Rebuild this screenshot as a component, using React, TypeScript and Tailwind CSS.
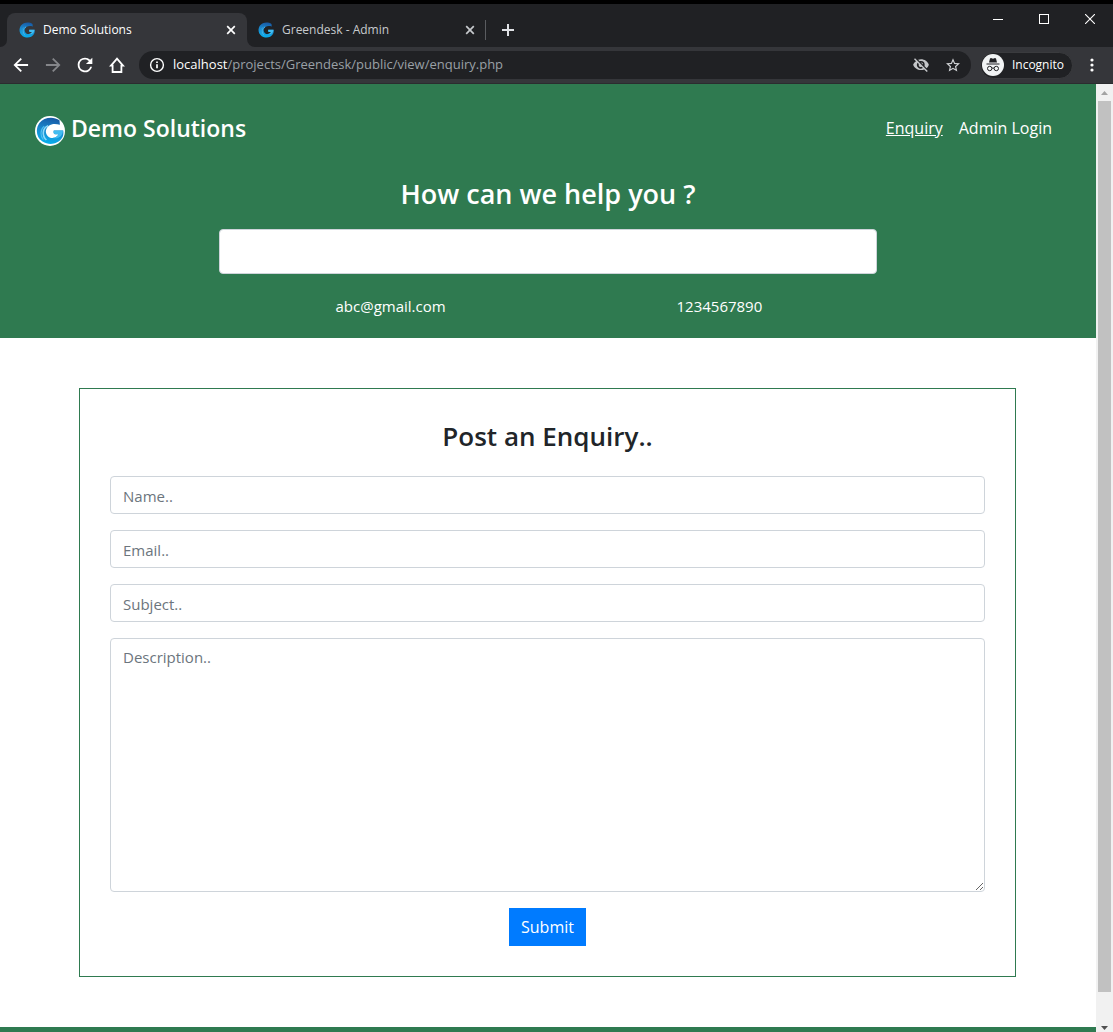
import { useId, type ReactNode } from "react";

function Swirl({ className, badge = false }: { className: string; badge?: boolean }) {
  const id = useId();
  return (
    <svg className={className} viewBox="0 0 32 32" aria-hidden="true">
      <defs>
        <linearGradient id={id} x1="0.6" y1="0" x2="0.4" y2="1">
          <stop offset="0" stopColor="#1757a3" />
          <stop offset="0.45" stopColor="#1b86cb" />
          <stop offset="1" stopColor="#08b0ee" />
        </linearGradient>
      </defs>
      {badge && <circle cx="16" cy="16" r="16" fill="#fff" />}
      <g transform={badge ? "translate(1 1) scale(0.93)" : undefined}>
        <path
          d="M27 3.800C20-1.200 9 .2 4 7c-5 7-3.600 16.500 3.500 21.300C15 33.200 25.500 31.500 30 24c1.500-2.500 1.800-5.500 1.300-8.500H20.500c-1 3 .5 4.400 2 4.400h3.500c-2.500 4.600-8.300 5.400-12 2.400-4-3.300-3.200-9.300.8-12.300C18.100 7.700 22.500 7.500 27.500 9z"
          fill={`url(#${id})`}
        />
        <path d="M31 15.500H20.500c-1 3 .5 4.400 2 4.400h3.500c-1.200 2.700-4 4.200-7 4 6 2.400 12 -2 12-8.400z" fill="#43bdf0" />
        <path
          d="M14 10C7.500 13 6.500 21 12 26.500"
          fill="none"
          stroke={badge ? "#8fdaf9" : "#4cb6ea"}
          strokeWidth="1.800"
        />
        <path d="M9.500 10.500C4.500 15 5 22 8.500 26" fill="none" stroke={badge ? "#4fbdf0" : "#2a9fde"} strokeWidth="1.300" />
      </g>
    </svg>
  );
}

function Close({ className }: { className: string }) {
  return (
    <svg className={className} viewBox="0 0 10 10" fill="none" stroke="currentColor" strokeWidth="1.700" aria-hidden="true">
      <path d="M1.200 1.200l7.600 7.600M8.800 1.200L1.200 8.800" />
    </svg>
  );
}

function IconButton({ label, className = "", children }: { label: string; className?: string; children: ReactNode }) {
  return (
    <button type="button" aria-label={label} className={`flex size-8 shrink-0 items-center justify-center ${className}`}>
      {children}
    </button>
  );
}

function TabStrip() {
  return (
    <div className="flex h-[43px] shrink-0 items-end bg-[#202124]">
      <div className="flex h-[34px] flex-1 items-center">
        <div className="flex h-full w-[7px] items-end bg-[#35363a]">
          <div className="h-full w-full rounded-br-lg bg-[#202124]" />
        </div>
        <div className="flex h-full w-60 items-center rounded-t-lg bg-[#35363a] pr-[9px] pl-3 text-white">
          <Swirl className="size-4" />
          <span className="ml-2 flex-1 text-xs">Demo Solutions</span>
          <button type="button" aria-label="Close tab" className="p-0.5">
            <Close className="size-[10px]" />
          </button>
        </div>
        <div className="h-full bg-[#35363a]">
          <div className="flex h-full w-[238px] items-center rounded-bl-lg bg-[#202124] pr-2 pl-[11px] text-[#c7cacd]">
            <Swirl className="size-4" />
            <span className="ml-2 flex-1 text-xs">Greendesk - Admin</span>
            <button type="button" aria-label="Close tab" className="p-0.5">
              <Close className="size-[10px]" />
            </button>
          </div>
        </div>
        <div className="h-5 w-px bg-[#5a5c60]" />
        <IconButton label="New tab" className="ml-1.5 text-[#dfe1e5]">
          <svg className="size-3" viewBox="0 0 12 12" stroke="currentColor" strokeWidth="2" aria-hidden="true">
            <path d="M6 0v12M0 6h12" />
          </svg>
        </IconButton>
      </div>
      <div className="flex h-full text-white">
        <button type="button" aria-label="Minimize" className="flex h-[30px] w-[46px] items-center justify-center">
          <span className="h-px w-2.5 bg-white" />
        </button>
        <button type="button" aria-label="Maximize" className="flex h-[30px] w-[46px] items-center justify-center">
          <span className="size-[10px] border border-white" />
        </button>
        <button type="button" aria-label="Close window" className="flex h-[30px] w-[46px] items-center justify-center">
          <svg className="size-[10px]" viewBox="0 0 10 10" stroke="currentColor" strokeWidth="1.100" aria-hidden="true">
            <path d="M0 0l10 10M10 0L0 10" />
          </svg>
        </button>
      </div>
    </div>
  );
}

function Toolbar() {
  return (
    <div className="flex h-[37px] shrink-0 items-center border-b border-[#2b2c2f] bg-[#35363a] pr-1 pl-[5px] text-white">
      <IconButton label="Back">
        <svg className="size-5" viewBox="0 0 24 24" fill="currentColor" aria-hidden="true">
          <path d="M20.500 10.900H7.200l5.900-5.900L11.500 3.500 3 12l8.500 8.500 1.600-1.500-5.900-5.900h13.300z" />
        </svg>
      </IconButton>
      <IconButton label="Forward" className="text-[#85868a]">
        <svg className="size-5" viewBox="0 0 24 24" fill="currentColor" aria-hidden="true">
          <path d="M3.500 10.900h13.300L10.900 5l1.600-1.500L21 12l-8.500 8.500-1.600-1.500 5.900-5.900H3.500z" />
        </svg>
      </IconButton>
      <IconButton label="Reload">
        <svg className="size-[22px]" viewBox="0 0 24 24" fill="currentColor" aria-hidden="true">
          <path d="M17.650 6.350A7.960 7.960 0 0012 4a8 8 0 107.730 10h-2.080A6 6 0 1112 6c1.660 0 3.140.69 4.220 1.780L13 11h7V4z" />
        </svg>
      </IconButton>
      <IconButton label="Home">
        <svg className="size-4" viewBox="0 0 16 16" fill="none" stroke="currentColor" strokeWidth="1.800" aria-hidden="true">
          <path d="M2 8.600H3.600v6.400h8.800V8.600H14L8 1.700z" />
        </svg>
      </IconButton>
      <div className="ml-[6px] flex h-7 min-w-0 flex-1 items-center rounded-full bg-[#202124] pr-0.5 pl-2.5">
        <svg className="size-4 shrink-0" viewBox="0 0 16 16" fill="none" stroke="currentColor" aria-hidden="true">
          <circle cx="8" cy="8" r="6.400" strokeWidth="1.400" />
          <path d="M8 7.200v4M8 4.400v1.600" strokeWidth="1.700" />
        </svg>
        <p className="ml-2 min-w-0 flex-1 truncate text-[13px] text-[#9aa0a6]">
          <span className="text-white">localhost</span>/projects/Greendesk/public/view/enquiry.php
        </p>
        <IconButton label="Third-party cookies blocked" className="text-[#c4c6c9]">
          <svg className="size-4" viewBox="0 0 24 24" fill="currentColor" aria-hidden="true">
            <path d="M12 6a5.500 5.500 0 015.500 5.500c0 .7-.1 1.400-.4 2l3.300 3.300c1.500-1.300 2.700-3 3.400-5.300C22 6.700 17.400 3.500 12 3.500c-1.500 0-3 .3-4.300.8l2.300 2.200c.6-.3 1.300-.5 2-.5zM1.500 3.300l3 3C2.600 7.600 1 9.400.2 11.500 2 16.300 6.600 19.500 12 19.500c1.700 0 3.300-.3 4.700-.9l4 4 1.500-1.500L3 1.800zM6.900 8.700l1.800 1.800a3.300 3.300 0 004.300 4.300l1.800 1.800A5.700 5.700 0 016.900 8.700zM11.800 8.300l3.400 3.400a3.300 3.300 0 00-3.400-3.400z" />
          </svg>
        </IconButton>
        <IconButton label="Bookmark this tab" className="text-[#d3d5d8]">
          <svg className="size-[14px]" viewBox="0 0 24 24" fill="currentColor" aria-hidden="true">
            <path d="M24 9.200l-8.600-.8L12 .5 8.600 8.400 0 9.200l6.500 5.700L4.600 23.300 12 18.900l7.400 4.400-1.900-8.400zM12 16.700l-4.500 2.700 1.200-5.100-4-3.400 5.200-.5L12 5.600l2.100 4.800 5.200.5-4 3.400 1.200 5.100z" />
          </svg>
        </IconButton>
      </div>
      <div className="ml-[9px] flex h-[27px] shrink-0 items-center rounded-full border border-[#3a3b3e] bg-[#202124] pr-2 pl-px">
        <svg className="size-[22px]" viewBox="0 0 22 22" aria-hidden="true">
          <circle cx="11" cy="11" r="11" fill="#f1f3f4" />
          <path d="M8 4.500l1-.4 2 .6 2-.6 1 .4 1 4.100H7zM4.500 9.600h13v1h-13z" fill="#202124" />
          <g fill="none" stroke="#202124">
            <circle cx="7.700" cy="14.500" r="2.200" />
            <circle cx="14.300" cy="14.500" r="2.200" />
            <path d="M9.900 14.300q1.100-.7 2.200 0" />
          </g>
        </svg>
        <span className="ml-2 text-xs">Incognito</span>
      </div>
      <IconButton label="Menu" className="ml-1">
        <svg className="size-4" viewBox="0 0 16 16" fill="currentColor" aria-hidden="true">
          <circle cx="7" cy="3" r="1.600" />
          <circle cx="7" cy="8" r="1.600" />
          <circle cx="7" cy="13" r="1.600" />
        </svg>
      </IconButton>
    </div>
  );
}

function Hero() {
  return (
    <header className="shrink-0 bg-[#2f7a50] pb-[19px] text-white">
      <nav className="flex h-[88px] items-center justify-between pr-11 pl-[35px]">
        <a href="#home" className="flex items-center gap-1.5 text-[23px] font-semibold">
          <Swirl className="mt-1.5 size-[30px]" badge />
          Demo Solutions
        </a>
        <div className="flex gap-4 text-base">
          <a href="#enquiry" className="underline">Enquiry</a>
          <a href="#admin">Admin Login</a>
        </div>
      </nav>
      <h1 className="mt-0.5 text-center text-[27px] leading-10 font-semibold">How can we help you ?</h1>
      <div className="mx-auto mt-[15px] w-3/5">
        <input type="text" aria-label="Search for help" className="block h-[45px] w-full rounded border border-[#ced4da] bg-white px-3 text-base text-gray-800" />
        <div className="mt-5 -mr-[7px] ml-[7px] grid grid-cols-2 pb-px text-center text-[15px] leading-6">
          <span>abc@gmail.com</span>
          <span>1234567890</span>
        </div>
      </div>
    </header>
  );
}

const fieldClass =
  "block w-full rounded border border-[#ced4da] bg-white px-3 text-[15px] leading-6 text-[#495057] placeholder:text-[#6c757d]";

function EnquiryForm() {
  return (
    <form className="mt-[50px] mr-20 mb-[50px] ml-[79px] flex shrink-0 flex-col items-center gap-4 border border-[#2f7a50] p-[30px]">
      <h2 className="mb-[7px] text-[26px] leading-[34px] font-semibold text-[#212529]">Post an Enquiry..</h2>
      <input type="text" aria-label="Name" placeholder="Name.." className={`${fieldClass} h-[38px] pt-0.5`} />
      <input type="email" aria-label="Email" placeholder="Email.." className={`${fieldClass} h-[38px] pt-0.5`} />
      <input type="text" aria-label="Subject" placeholder="Subject.." className={`${fieldClass} h-[38px] pt-0.5`} />
      <textarea aria-label="Description" placeholder="Description.." className={`${fieldClass} h-[254px] resize-y py-1.5`} />
      <button type="submit" className="h-[38px] bg-[#007bff] px-3 text-base text-white">Submit</button>
    </form>
  );
}

function ScrollRail() {
  return (
    <div className="flex w-[17px] shrink-0 flex-col items-center bg-[#f1f1f1]" aria-hidden="true">
      <svg className="size-[17px] shrink-0" viewBox="0 0 17 17">
        <path d="M5 11h7L8.500 7z" fill="#a3a3a3" />
      </svg>
      <div className="mb-[27px] w-[13px] flex-1 bg-[#c1c1c1]" />
      <svg className="h-[13px] w-[17px] shrink-0" viewBox="0 0 17 13">
        <path d="M5 7h7l-3.500 4z" fill="#505050" />
      </svg>
    </div>
  );
}

export default function App() {
  return (
    <div className="flex h-screen flex-col overflow-hidden border-t-4 border-black bg-white font-['Open_Sans','Noto_Sans',sans-serif]">
      <TabStrip />
      <Toolbar />
      <div className="flex min-h-0 flex-1">
        <main className="flex min-w-0 flex-1 flex-col overflow-hidden">
          <Hero />
          <EnquiryForm />
          <div className="min-h-[5px] flex-1 bg-[#2f7a50]" />
        </main>
        <ScrollRail />
      </div>
    </div>
  );
}
